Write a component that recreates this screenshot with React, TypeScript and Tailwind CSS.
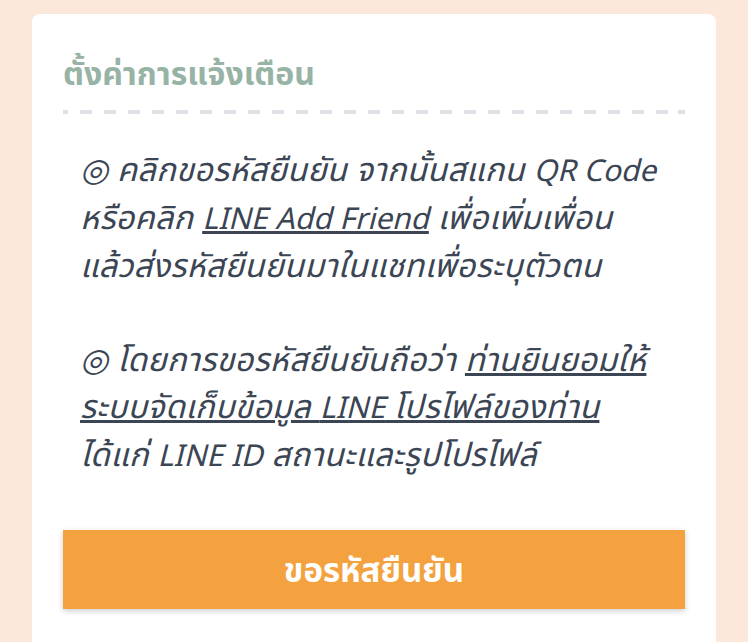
function En({ children }: { children: React.ReactNode }) {
  return <span className="text-[30px] tracking-normal">{children}</span>;
}

export default function App() {
  return (
    <div className="min-h-[642px] bg-[#fbe8db] px-8 pt-[14px] font-['Noto_Sans','Noto_Sans_Thai',sans-serif]">
      <div className="min-h-[628px] rounded-t-lg bg-white px-[31px] pt-[37px]">
        <h2 className="text-[32px] font-bold leading-[44px] text-[#97b3a5]">ตั้งค่าการแจ้งเตือน</h2>
        <div className="mt-[15px] h-[4px] bg-[repeating-linear-gradient(90deg,#e0e0e7_0_12px,transparent_12px_24px)] bg-[position:-7px_0]" />
        <div className="whitespace-nowrap px-[17px] pt-[34px] font-['Noto_Sans_Thai','Noto_Sans_Thai_UI','Noto_Sans',sans-serif] text-[32.5px] italic leading-[47px] tracking-[0.3px] text-[#3b4554]">
          <p>
            ◎ คลิกขอรหัสยืนยัน จากนั้นสแกน <En>QR Code</En>
            <br />
            หรือคลิก{' '}
            <span className="underline">
              <En>LINE Add Friend</En>
            </span>{' '}
            เพื่อเพิ่มเพื่อน
            <br />
            แล้วส่งรหัสยืนยันมาในแชทเพื่อระบุตัวตน
          </p>
          <p className="mt-[47px]">
            ◎ โดยการขอรหัสยืนยันถือว่า <span className="underline">ท่านยินยอมให้</span>
            <br />
            <span className="underline">
              ระบบจัดเก็บข้อมูล <En>LINE</En> โปรไฟล์ของท่าน
            </span>
            <br />
            ได้แก่ <En>LINE ID</En> สถานะและรูปโปรไฟล์
          </p>
        </div>
        <button className="mt-[49px] flex h-[79px] w-full items-center justify-center bg-[#f4a23f] text-[33px] font-bold text-white shadow-[0_2px_6px_rgba(0,0,0,0.2)]">
          ขอรหัสยืนยัน
        </button>
      </div>
    </div>
  );
}
